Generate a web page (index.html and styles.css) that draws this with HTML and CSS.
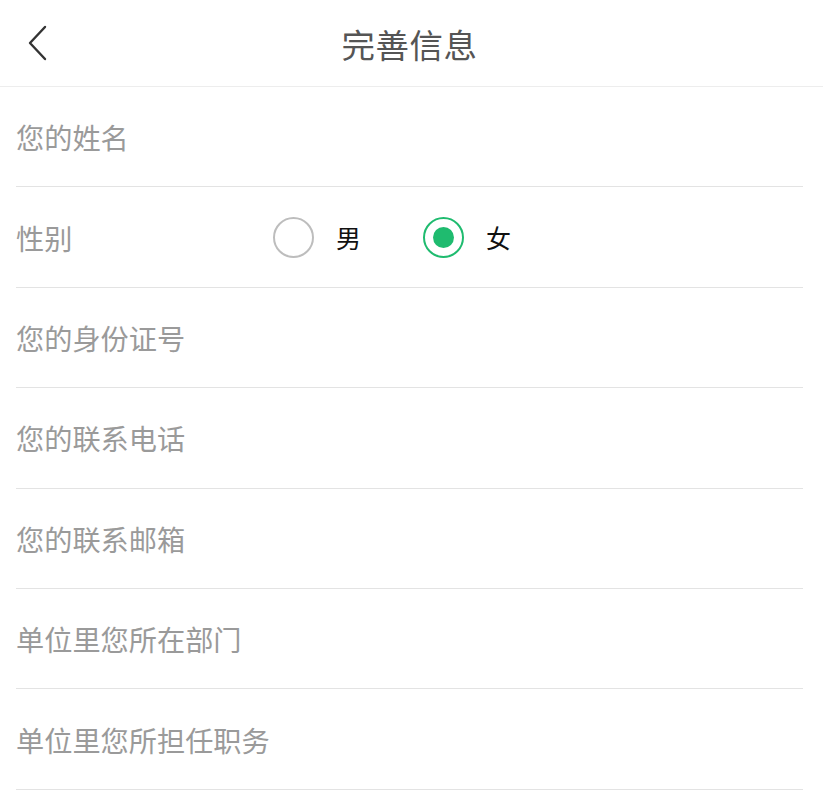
FILE: index.html
```html
<!DOCTYPE html>
<html>
<head>
    <meta charset="UTF-8">
    <link rel="stylesheet" href="styles.css">
</head>
<body>
    <div class="header">
        <span class="back">
            <svg width="20" height="36" viewBox="0 0 20 36"><path d="M18 2 L3 18 L18 34" fill="none" stroke="#333" stroke-width="2.4" stroke-linecap="round" stroke-linejoin="round"/></svg>
        </span>
        <h1 class="title">完善信息</h1>
    </div>

    <div class="form">
        <div class="row"><span class="placeholder">您的姓名</span></div>
        <div class="row">
            <span class="placeholder label">性别</span>
            <label class="radio"><span class="dot"></span>男</label>
            <label class="radio checked"><span class="dot"></span>女</label>
        </div>
        <div class="row"><span class="placeholder">您的身份证号</span></div>
        <div class="row"><span class="placeholder">您的联系电话</span></div>
        <div class="row"><span class="placeholder">您的联系邮箱</span></div>
        <div class="row"><span class="placeholder">单位里您所在部门</span></div>
        <div class="row"><span class="placeholder">单位里您所担任职务</span></div>
    </div>
</body>
</html>
```

FILE: styles.css
```css
body { margin: 0; background: #fff; font-family: "Noto Sans CJK SC", "Noto Sans", sans-serif; }
.header { height: 86px; border-bottom: 1px solid #ededed; display: flex; align-items: center; justify-content: center; position: relative; }
.back { position: absolute; left: 27px; top: 25px; }
.title { margin: 0 0 0 -4px; font-size: 33.5px; font-weight: normal; color: #555; letter-spacing: 0.5px; }
.form { padding: 0 20px 0 16px; }
.row { height: 100.4px; box-sizing: border-box; border-bottom: 1px solid #e3e3e3; display: flex; align-items: center; }
.placeholder { font-size: 28.2px; color: #9a9a9a; }
.label { width: 257px; }
.radio { display: flex; align-items: center; font-size: 25px; color: #111; margin-right: 62px; }
.dot { width: 37px; height: 37px; border: 2px solid #bdbdbd; border-radius: 50%; margin-right: 22px; box-sizing: content-box; position: relative; }
.checked .dot { border-color: #1fbb6f; }
.checked .dot::after { content: ""; position: absolute; left: 8px; top: 8px; width: 21px; height: 21px; border-radius: 50%; background: #1fbb6f; }
```
